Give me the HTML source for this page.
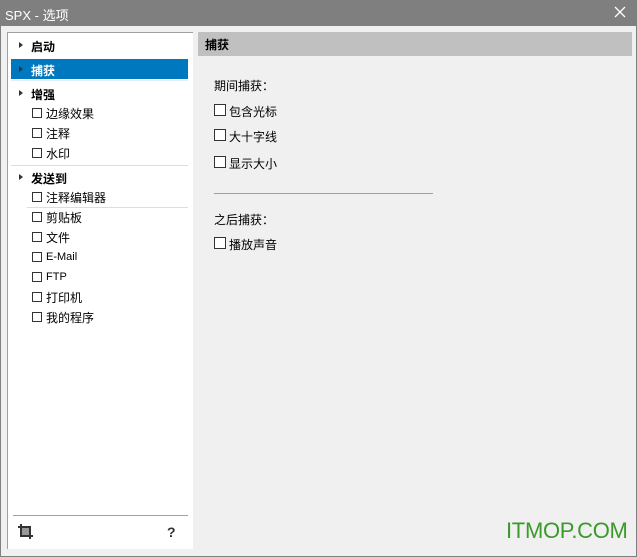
<!DOCTYPE html><html><head><meta charset="utf-8"><style>
*{margin:0;padding:0;box-sizing:border-box}
body{width:637px;height:557px;background:#f0f0f0;font-family:"Liberation Sans","Noto Sans CJK SC",sans-serif;font-size:12px;color:#000;position:relative;overflow:hidden}
.a{position:absolute;white-space:nowrap}
.cb{position:absolute;width:10px;height:10px;border:1px solid #333;background:#fff}
.cb2{position:absolute;width:12px;height:12px;border:1px solid #333;background:#fff}
.tri{position:absolute;width:0;height:0;border-top:3.5px solid transparent;border-bottom:3.5px solid transparent;border-left:4px solid #333}
</style></head><body>
<div class="a" style="left:0;top:0;width:637px;height:26px;background:#7f7f7f"></div>
<div class="a" style="left:5px;top:5px;color:#fff;font-size:13px">SPX - 选项</div>
<svg class="a" style="left:614px;top:6px" width="12" height="12"><path d="M1 1L11 11M11 1L1 11" stroke="#fff" stroke-width="1.3"/></svg>
<div class="a" style="left:0;top:26px;width:1px;height:531px;background:#808080"></div>
<div class="a" style="left:636px;top:26px;width:1px;height:531px;background:#808080"></div>
<div class="a" style="left:0;top:556px;width:637px;height:1px;background:#808080"></div>
<div class="a" style="left:7px;top:32px;width:186px;height:517px;background:#fff;border-left:1px solid #a0a0a0;border-top:1px solid #a0a0a0"></div>
<div class="a" style="left:11px;top:59px;width:177px;height:20px;background:#0078c0"></div>
<div class="tri" style="left:19px;top:42px"></div><div class="a" style="left:31px;top:38px;font-weight:bold">启动</div>
<div class="tri" style="left:19px;top:66px"></div><div class="a" style="left:31px;top:62px;font-weight:bold;color:#fff">捕获</div>
<div class="a" style="left:11px;top:80px;width:177px;height:1px;background:#e4eef4"></div>
<div class="tri" style="left:19px;top:90px"></div><div class="a" style="left:31px;top:86px;font-weight:bold">增强</div>
<div class="cb" style="left:32px;top:108px"></div><div class="a" style="left:46px;top:105px">边缘效果</div>
<div class="cb" style="left:32px;top:128px"></div><div class="a" style="left:46px;top:125px">注释</div>
<div class="cb" style="left:32px;top:148px"></div><div class="a" style="left:46px;top:145px">水印</div>
<div class="a" style="left:11px;top:165px;width:177px;height:1px;background:#ddd"></div>
<div class="tri" style="left:19px;top:174px"></div><div class="a" style="left:31px;top:170px;font-weight:bold">发送到</div>
<div class="cb" style="left:32px;top:192px"></div><div class="a" style="left:46px;top:189px">注释编辑器</div>
<div class="a" style="left:27px;top:207px;width:161px;height:1px;background:#ddd"></div>
<div class="cb" style="left:32px;top:212px"></div><div class="a" style="left:46px;top:209px">剪贴板</div>
<div class="cb" style="left:32px;top:232px"></div><div class="a" style="left:46px;top:229px">文件</div>
<div class="cb" style="left:32px;top:252px"></div><div class="a" style="left:46px;top:251px;font-size:11px">E-Mail</div>
<div class="cb" style="left:32px;top:272px"></div><div class="a" style="left:46px;top:271px;font-size:11px">FTP</div>
<div class="cb" style="left:32px;top:292px"></div><div class="a" style="left:46px;top:289px">打印机</div>
<div class="cb" style="left:32px;top:312px"></div><div class="a" style="left:46px;top:309px">我的程序</div>
<div class="a" style="left:13px;top:515px;width:175px;height:1px;background:#a0a0a0"></div>
<svg class="a" style="left:17px;top:523px" width="17" height="17"><path d="M4 1V13H16M1 4H13V16" stroke="#333" stroke-width="2" fill="none"/><rect x="5" y="5" width="7" height="7" fill="#999"/></svg>
<div class="a" style="left:167px;top:524px;font-weight:bold;font-size:14px;color:#333">?</div>
<div class="a" style="left:198px;top:32px;width:434px;height:24px;background:#c0c0c0"></div>
<div class="a" style="left:205px;top:36px;font-weight:bold">捕获</div>
<div class="a" style="left:214px;top:77px">期间捕获：</div>
<div class="cb2" style="left:214px;top:104px"></div><div class="a" style="left:229px;top:103px">包含光标</div>
<div class="cb2" style="left:214px;top:129px"></div><div class="a" style="left:229px;top:128px">大十字线</div>
<div class="cb2" style="left:214px;top:156px"></div><div class="a" style="left:229px;top:155px">显示大小</div>
<div class="a" style="left:214px;top:193px;width:219px;height:1px;background:#a0a0a0"></div>
<div class="a" style="left:214px;top:211px">之后捕获：</div>
<div class="cb2" style="left:214px;top:237px"></div><div class="a" style="left:229px;top:236px">播放声音</div>
<div class="a" style="left:506px;top:518px;font-size:22px;letter-spacing:-0.3px;color:#3a9a2a">ITMOP.COM</div>
</body></html>
